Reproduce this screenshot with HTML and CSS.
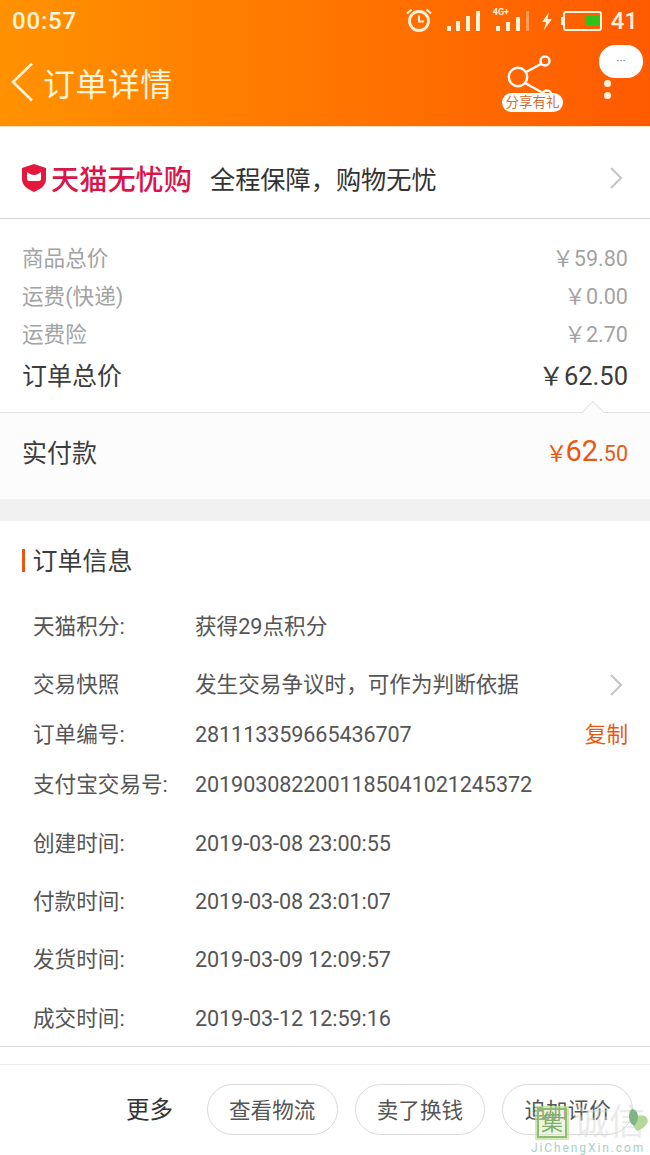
FILE: index.html
```html
<!DOCTYPE html>
<html lang="zh-CN">
<head>
    <meta charset="UTF-8">
    <meta name="viewport" content="width=device-width, initial-scale=1.0">
    <title>订单详情</title>
    <link rel="stylesheet" href="styles.css">
</head>
<body>
    <header class="top">
        <div class="status">
            <span class="clock">00:57</span>
            <div class="status-icons">
                <svg class="ic-alarm" width="28" height="26" viewBox="0 0 28 26">
                    <circle cx="14" cy="13" r="9.5" fill="none" stroke="#fff3dc" stroke-width="2.8"/>
                    <path d="M14 7.500V13.500H19" fill="none" stroke="#fff3dc" stroke-width="2"/>
                    <path d="M2 5.500L6.500 1.500M26 5.500L21.500 1.500" stroke="#fff3dc" stroke-width="2"/>
                </svg>
                <svg class="ic-signal" width="36" height="22" viewBox="0 0 36 22">
                    <path d="M2 16h4v5H2zM11 11h4v10h-4zM21 6h4v15h-4zM31 1h4v20h-4z" fill="#fff3dc"/>
                </svg>
                <div class="sim2">
                    <span class="net">4G+</span>
                    <svg width="36" height="22" viewBox="0 0 36 22">
                        <path d="M3 16h4v5H3zM13 12h4v9h-4zM23 7h4v14h-4z" fill="#fff3dc"/>
                        <path d="M33 1h3v20h-3z" fill="#fff3dc" opacity=".4"/>
                    </svg>
                </div>
                <svg class="ic-bolt" width="12" height="18" viewBox="0 0 12 18">
                    <path d="M8 0L1 10h4l-2 8 8-11H6.500z" fill="#fff3dc"/>
                </svg>
                <div class="battery"><div class="battery-fill"></div></div>
                <span class="level">41</span>
            </div>
        </div>
        <div class="nav">
            <div class="nav-left">
                <svg width="24" height="40" viewBox="0 0 24 40">
                    <path d="M21 1.500L2 20l19 18.500" fill="none" stroke="#fff3dc" stroke-width="2.600"/>
                </svg>
                <h1>订单详情</h1>
            </div>
            <div class="nav-right">
                <div class="share">
                    <svg width="60" height="46" viewBox="0 0 60 46">
                        <circle cx="16" cy="24" r="9.200" fill="none" stroke="#fff" stroke-width="2.400"/>
                        <circle cx="43" cy="8" r="4.500" fill="none" stroke="#fff" stroke-width="2.400"/>
                        <circle cx="45" cy="42" r="4.500" fill="none" stroke="#fff" stroke-width="2.400"/>
                        <path d="M24 19L39 11M23 30l18 10" stroke="#fff" stroke-width="2.400"/>
                    </svg>
                    <span class="share-tag">分享有礼</span>
                </div>
                <div class="more">
                    <div class="bubble">···</div>
                    <i class="dot"></i>
                    <i class="dot"></i>
                </div>
            </div>
        </div>
    </header>

    <section class="assure">
        <svg class="shield" width="26" height="30" viewBox="0 0 26 30">
            <path d="M13 1l12 4v11c0 6-5 10-12 13C6 26 1 22 1 16V5z" fill="#e5173d"/>
            <path d="M6 9c2 1.500 4 3 7 3s5-1.500 7-3v7c0 1-1 2-2 2H8c-1 0-2-1-2-2z" fill="#fff"/>
        </svg>
        <span class="assure-brand">天猫无忧购</span>
        <span class="assure-text">全程保障，购物无忧</span>
        <svg class="chevron" width="14" height="24" viewBox="0 0 14 24">
            <path d="M2 2l10 10L2 22" fill="none" stroke="#c4c4c4" stroke-width="2"/>
        </svg>
    </section>

    <section class="prices">
        <div class="price-row"><span>商品总价</span><span>￥59.80</span></div>
        <div class="price-row"><span>运费(快递)</span><span>￥0.00</span></div>
        <div class="price-row"><span>运费险</span><span>￥2.70</span></div>
        <div class="price-row total"><span>订单总价</span><span class="total-value">￥62.50</span></div>
    </section>

    <section class="paid">
        <i class="notch"></i>
        <span class="paid-label">实付款</span>
        <span class="paid-value"><small class="yen">￥</small><b>62</b><small>.50</small></span>
    </section>

    <div class="gap"></div>

    <section class="info">
        <h2>订单信息</h2>
        <div class="info-row"><span class="key">天猫积分:</span><span class="val">获得29点积分</span></div>
        <div class="info-row">
            <span class="key">交易快照</span><span class="val">发生交易争议时，可作为判断依据</span>
            <svg class="chevron" width="14" height="24" viewBox="0 0 14 24">
                <path d="M2 2l10 10L2 22" fill="none" stroke="#c4c4c4" stroke-width="2"/>
            </svg>
        </div>
        <div class="info-row r-no"><span class="key">订单编号:</span><span class="val num">281113359665436707</span><span class="copy">复制</span></div>
        <div class="info-row"><span class="key">支付宝交易号:</span><span class="val num">2019030822001185041021245372</span></div>
        <div class="info-row r-tall"><span class="key">创建时间:</span><span class="val num">2019-03-08 23:00:55</span></div>
        <div class="info-row"><span class="key">付款时间:</span><span class="val num">2019-03-08 23:01:07</span></div>
        <div class="info-row"><span class="key">发货时间:</span><span class="val num">2019-03-09 12:09:57</span></div>
        <div class="info-row r-tall"><span class="key">成交时间:</span><span class="val num">2019-03-12 12:59:16</span></div>
    </section>

    <div class="strip"></div>

    <footer class="actions">
        <span class="more-text">更多</span>
        <button class="pill">查看物流</button>
        <button class="pill">卖了换钱</button>
        <button class="pill">追加评价</button>
    </footer>

    <div class="watermark">
        <div class="wm-top">
            <span class="wm-box">集</span>
            <span class="wm-name">诚信</span>
            <svg class="wm-heart" width="22" height="24" viewBox="0 0 22 24">
                <path d="M6 10c3-2 8-4 12-2 3 2 4 6 1 9-2 3-6 5-9 6-3-3-5-8-4-13z" fill="#b4d89a"/>
                <path d="M5 1c3 0 6 3 6 8 0 4-2 7-4 9-3-2-5-5-5-9 0-4 1-7 3-8z" fill="#7fb486"/>
            </svg>
        </div>
        <div class="wm-url">JiChengXin.com</div>
    </div>
</body>
</html>
```

FILE: styles.css
```css
* {
    box-sizing: border-box;
}
body {
    margin: 0;
    width: 650px;
    height: 1155px;
    overflow: hidden;
    position: relative;
    background-color: #fff;
    font-family: Roboto, "Noto Sans CJK SC", sans-serif;
    color: #3c3c3c;
}

/* top bar */
.top {
    height: 127px;
    background: linear-gradient(90deg, #ff9200, #ff5a00);
    border-bottom: 1px solid #ffe2c4;
    color: #fff3dc;
}
.status {
    display: flex;
    justify-content: space-between;
    align-items: center;
    height: 40px;
    padding: 1px 12px 0 12px;
}
.clock {
    font-size: 24px;
    font-weight: 500;
    letter-spacing: 0.8px;
}
.status-icons {
    display: flex;
    align-items: center;
}
.ic-alarm {
    margin-right: 12px;
}
.ic-signal {
    margin-right: 12px;
}
.sim2 {
    position: relative;
    margin-right: 12px;
    width: 36px;
    height: 22px;
}
.sim2 svg {
    display: block;
}
.net {
    position: absolute;
    left: 0;
    top: -3px;
    font-size: 9px;
    font-weight: 700;
}
.ic-bolt {
    margin-right: 10px;
}
.battery {
    position: relative;
    display: flex;
    justify-content: flex-end;
    width: 39px;
    height: 20px;
    padding: 3px 1px;
    border: 2px solid #fff3dc;
    border-radius: 3px;
    margin-right: 9px;
}
.battery::before {
    content: "";
    position: absolute;
    left: -4px;
    top: 4px;
    width: 2px;
    height: 8px;
    background-color: #fff3dc;
}
.battery-fill {
    width: 14px;
    background-color: #2fc21a;
}
.level {
    font-size: 24px;
    font-weight: 500;
}
.nav {
    display: flex;
    justify-content: space-between;
    height: 86px;
}
.nav-left {
    display: flex;
    align-items: center;
    gap: 8px;
    padding: 0 0 2px 11px;
}
.nav-left svg {
    display: block;
}
h1 {
    margin: 0;
    font-size: 32px;
    font-weight: 400;
    letter-spacing: 0.4px;
}
.nav-right {
    display: flex;
    padding-right: 7px;
}
.share {
    position: relative;
    width: 61px;
    margin-right: 45px;
    padding-top: 13px;
    text-align: center;
}
.share svg {
    display: block;
}
.share-tag {
    position: absolute;
    left: 0;
    top: 53px;
    width: 61px;
    height: 19px;
    line-height: 19px;
    border-radius: 10px;
    background-color: #fff;
    color: #cf6d35;
    font-size: 13.5px;
}
.more {
    position: relative;
    width: 44px;
    display: flex;
    flex-direction: column;
    align-items: center;
    gap: 5px;
    padding-top: 40px;
    padding-right: 28px;
    margin-left: -9px;
}
.bubble {
    position: absolute;
    top: 5px;
    right: 0;
    width: 44px;
    height: 33px;
    line-height: 32px;
    border-radius: 16px;
    background-color: #fff;
    color: #777;
    font-size: 12px;
    text-align: center;
}
.dot {
    width: 7px;
    height: 7px;
    border-radius: 50%;
    background-color: #fff3dc;
}

/* assurance row */
.assure {
    display: flex;
    align-items: center;
    height: 92px;
    padding: 10px 27px 0 21px;
    border-bottom: 1px solid #d9d9d9;
}
.shield {
    margin-right: 4px;
}
.assure-brand {
    color: #d8164a;
    font-size: 28.2px;
    font-weight: 500;
    margin-right: 18px;
}
.assure-text {
    font-size: 25.2px;
    color: #333;
    flex: 1;
}

/* price summary */
.prices {
    height: 194px;
    padding: 18px 22px 0;
    border-bottom: 1px solid #e2e2e2;
}
.price-row {
    display: flex;
    justify-content: space-between;
    align-items: center;
    height: 38.25px;
    font-size: 21.6px;
    color: #a3a3a3;
}
.price-row.total {
    height: 44px;
    font-size: 25px;
    color: #3c3c3c;
}
.total-value {
    font-size: 25.5px;
}
.paid {
    position: relative;
    display: flex;
    justify-content: space-between;
    align-items: center;
    height: 86px;
    padding: 0 22px 10px;
    background-color: #fcfcfc;
}
.notch {
    position: absolute;
    top: -9px;
    right: 49px;
    width: 16px;
    height: 16px;
    transform: rotate(45deg);
    background-color: #fcfcfc;
    border: 1px solid #e2e2e2;
    border-width: 1px 0 0 1px;
}
.paid-label {
    font-size: 25px;
}
.paid-value {
    color: #e8590f;
    font-size: 21.5px;
}
.paid-value b {
    font-weight: 400;
    font-size: 29px;
}
.paid-value small {
    font-size: 21.5px;
}
.paid-value .yen {
    font-size: 22px;
    margin-right: -2px;
}
.gap {
    height: 22px;
    background-color: #f1f1f1;
}

/* order info */
.info {
    padding: 0 22px 0 0;
    height: 526px;
    font-size: 21.6px;
}
h2 {
    position: relative;
    display: flex;
    align-items: center;
    height: 77px;
    margin: 0;
    padding: 0 0 2px 32.5px;
    font-size: 25px;
    font-weight: 400;
}
h2::before {
    content: "";
    position: absolute;
    left: 22px;
    top: 28px;
    width: 2.5px;
    height: 23px;
    background-color: #e8590f;
}
.info-row {
    display: flex;
    align-items: center;
    height: 58px;
    line-height: 30px;
    padding-left: 33px;
    color: #555;
}
.key {
    width: 162px;
    flex-shrink: 0;
}
.val {
    flex: 1;
}
.num {
    letter-spacing: -0.1px;
}
.info .chevron {
    margin-right: 5px;
}
.r-no {
    height: 42px;
}
.r-tall {
    height: 59px;
}
.copy {
    color: #e8590f;
}

.strip {
    position: absolute;
    top: 1046px;
    left: 0;
    width: 650px;
    height: 19px;
    border-top: 1px solid #d9d9d9;
    border-bottom: 1px solid #ececec;
}

/* bottom buttons */
.actions {
    position: absolute;
    left: 0;
    top: 1064px;
    width: 650px;
    height: 91px;
    display: flex;
    align-items: flex-start;
    padding: 20px 17px 0 126px;
}
.more-text {
    font-size: 23.5px;
    width: 81px;
    line-height: 52px;
    color: #333;
}
.pill {
    width: 131px;
    height: 51px;
    margin-right: 17px;
    padding: 0 0 3px;
    border: 1px solid #d9d9d9;
    border-radius: 26px;
    background-color: #fff;
    font-family: inherit;
    font-size: 21.6px;
    color: #555;
}
.pill:last-child {
    margin-right: 0;
}

/* site stamp over the corner */
.watermark {
    position: absolute;
    left: 531px;
    top: 1108px;
    width: 119px;
    white-space: nowrap;
}
.wm-top {
    position: relative;
    display: flex;
    align-items: center;
    padding-left: 6px;
}
.wm-box {
    width: 30px;
    height: 30px;
    line-height: 26px;
    text-align: center;
    border: 2px solid #8fbb7a;
    outline: 2px solid rgba(190, 230, 140, 0.7);
    background-color: rgba(220, 240, 190, 0.5);
    color: #7fae6c;
    font-size: 22px;
}
.wm-name {
    margin-left: 6px;
    font-size: 36px;
    line-height: 30px;
    color: rgba(215, 215, 215, 0.5);
}
.wm-heart {
    position: absolute;
    left: 96px;
    top: 0;
}
.wm-url {
    font-size: 12px;
    line-height: 14px;
    letter-spacing: 1.9px;
    color: #a5cfc8;
    margin-top: 3px;
}
```
